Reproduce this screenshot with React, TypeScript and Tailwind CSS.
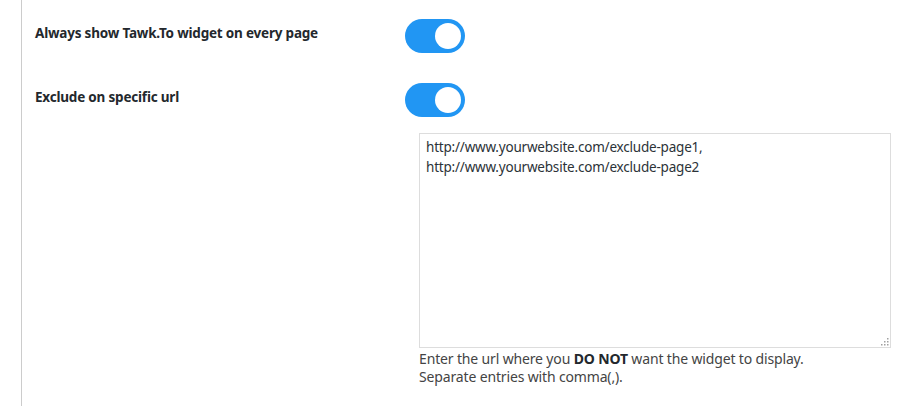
import React from "react";

function Toggle() {
  return (
    <div className="relative h-[34px] w-[60px] rounded-full bg-[#2196f3]">
      <div className="absolute right-[4px] top-[4px] h-[26px] w-[26px] rounded-full bg-white" />
    </div>
  );
}

function Grip() {
  const dots: [number, number][] = [
    [8, 0],
    [5, 3],
    [8, 3],
    [2, 6],
    [5, 6],
    [8, 6],
  ];
  return (
    <svg className="pointer-events-none absolute bottom-[2px] right-[2px]" width="10" height="8" viewBox="0 0 10 8">
      {dots.map(([x, y], i) => (
        <rect key={i} x={x} y={y} width="1.5" height="1.5" fill="#a0a0a0" />
      ))}
    </svg>
  );
}

export default function App() {
  return (
    <div
      className="h-[406px] w-[903px] bg-white text-[#23282d]"
      style={{ fontFamily: '"Noto Sans", "Open Sans", sans-serif' }}
    >
      <div className="ml-[21px] h-full border-l border-[#cccccc] pl-[13px]">
        <div className="flex pt-[19px]">
          <div className="w-[370px] pt-[4px] text-[13.5px] font-bold leading-[20px] tracking-[-0.2px]">
            Always show Tawk.To widget on every page
          </div>
          <Toggle />
        </div>
        <div className="flex pt-[30px]">
          <div className="w-[370px] pt-[4px] text-[13.5px] font-bold leading-[20px] tracking-[-0.2px]">
            Exclude on specific url
          </div>
          <Toggle />
        </div>
        <div className="pl-[384px] pt-[16px]">
          <div className="relative h-[215px] w-[472px]">
            <textarea
              className="block h-full w-full resize-none border border-[#dddddd] px-[6px] py-[3px] text-[13.5px] leading-[20px] tracking-[-0.2px] text-[#2c3338] outline-none"
              style={{ fontFamily: '"Noto Sans", "Open Sans", sans-serif' }}
              defaultValue={
                "http://www.yourwebsite.com/exclude-page1,\nhttp://www.yourwebsite.com/exclude-page2"
              }
            />
            <Grip />
          </div>
          <div className="mt-[2px] text-[14px] leading-[18px] tracking-[-0.15px] text-[#444444]">
            Enter the url where you <b className="text-[#23282d]">DO NOT</b> want the widget to display.
            <br />
            Separate entries with comma(,).
          </div>
        </div>
      </div>
    </div>
  );
}
